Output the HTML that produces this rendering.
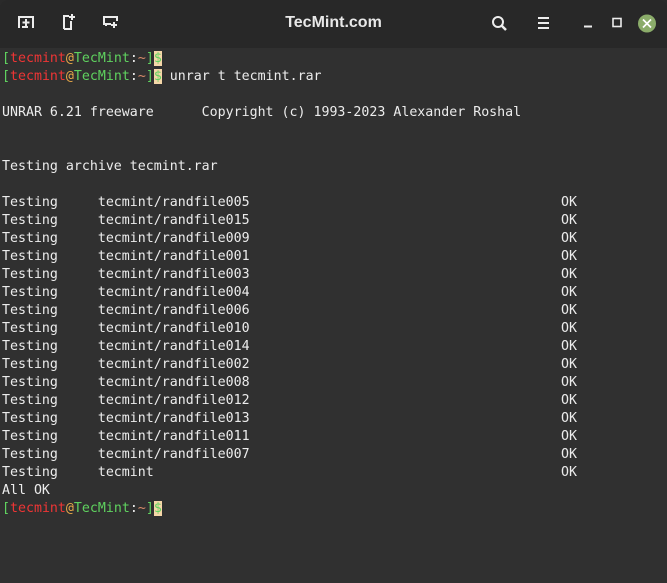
<!DOCTYPE html>
<html><head><meta charset="utf-8"><style>
html,body{margin:0;padding:0;background:#2a2a2a;width:667px;height:583px;overflow:hidden}
.win{position:absolute;left:0;top:0;width:667px;height:583px;background:#303030;border-radius:8px 8px 0 0;overflow:hidden}
.bar{position:absolute;left:0;top:0;width:667px;height:48px;background:#282828}
.title{position:absolute;left:0;width:667px;top:14px;text-align:center;color:#e8e8e8;font:bold 16px "Liberation Sans",sans-serif}
pre{position:absolute;left:2px;top:50px;margin:0;font-family:"DejaVu Sans Mono","Liberation Mono",monospace;font-size:13.28px;line-height:18px;color:#ececec}
.g{color:#5fd25f}.r{color:#ef3535}.o{color:#e8a848}.t{color:#d98a6a}
.cur{background:#f5d7a8;color:#5fd25f}
svg{position:absolute}
</style></head><body><div class="win">
<div class="bar">
<svg width="667" height="48" fill="none" stroke="#ececec" stroke-width="2">
<path d="M19 28 V17 H33 V28 M22 27 H28"/><path d="M26 19 v7 M22.5 22.5 h7"/>
<path d="M64 29 V16 H69 M64 29 H71 V21"/><path d="M72 14 v6 M69 17 h6"/>
<path d="M111 24 H104 V17 H117 V21 M106 24 v2"/><path d="M114 22 v6 M111 25 h6"/>
<circle cx="498" cy="22" r="5"/><path d="M502 26 L506 30" stroke-width="2.5"/>
<path d="M538 18 H549 M538 23 H549 M538 28 H549"/>
<path d="M584 26.5 H592"/><rect x="613" y="18.5" width="8" height="8" stroke-width="1.6"/>
<circle cx="647" cy="23.5" r="9" fill="#8bac6a" stroke="none"/><path d="M643 19.5 L651 27.5 M651 19.5 L643 27.5" stroke="#fff" stroke-width="1.7"/>
</svg>
<div class="title">TecMint.com</div>
</div>
<pre><span class="g">[</span><span class="r">tecmint</span><span class="o">@</span><span class="g">TecMint</span>:<span class="t">~</span><span class="g">]</span><span class="cur">$</span>
<span class="g">[</span><span class="r">tecmint</span><span class="o">@</span><span class="g">TecMint</span>:<span class="t">~</span><span class="g">]</span><span class="cur">$</span> unrar t tecmint.rar

UNRAR 6.21 freeware      Copyright (c) 1993-2023 Alexander Roshal


Testing archive tecmint.rar

Testing     tecmint/randfile005                                       OK
Testing     tecmint/randfile015                                       OK
Testing     tecmint/randfile009                                       OK
Testing     tecmint/randfile001                                       OK
Testing     tecmint/randfile003                                       OK
Testing     tecmint/randfile004                                       OK
Testing     tecmint/randfile006                                       OK
Testing     tecmint/randfile010                                       OK
Testing     tecmint/randfile014                                       OK
Testing     tecmint/randfile002                                       OK
Testing     tecmint/randfile008                                       OK
Testing     tecmint/randfile012                                       OK
Testing     tecmint/randfile013                                       OK
Testing     tecmint/randfile011                                       OK
Testing     tecmint/randfile007                                       OK
Testing     tecmint                                                   OK
All OK
<span class="g">[</span><span class="r">tecmint</span><span class="o">@</span><span class="g">TecMint</span>:<span class="t">~</span><span class="g">]</span><span class="cur">$</span></pre>
</div></body></html>
